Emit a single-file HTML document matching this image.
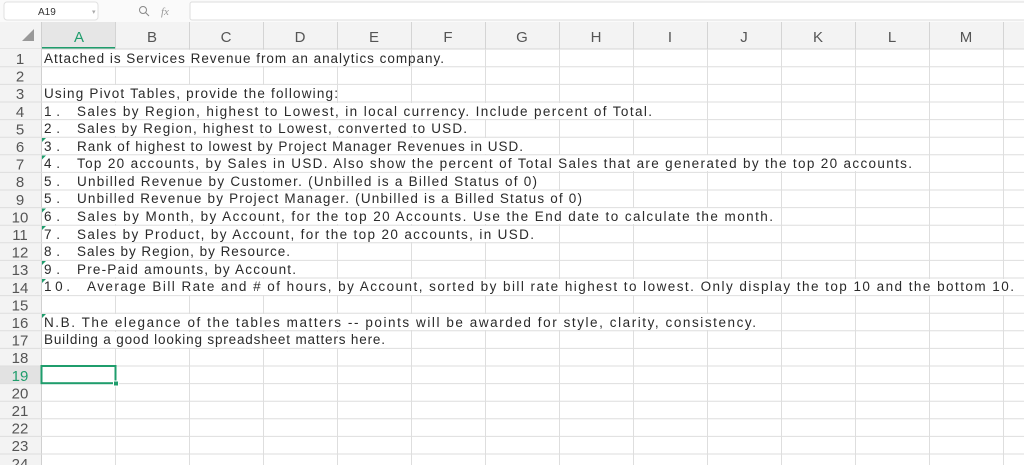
<!DOCTYPE html>
<html><head><meta charset="utf-8"><style>
html,body{margin:0;padding:0;background:#fff;overflow:hidden}
svg{display:block;font-family:"Liberation Sans",sans-serif}
</style></head><body>
<svg width="1024" height="465" viewBox="0 0 1024 465" xmlns="http://www.w3.org/2000/svg">
<rect width="1024" height="465" fill="#fff"/>
<!-- top bar -->
<rect x="0" y="0" width="1024" height="22" fill="#fafafa"/>
<rect x="4" y="2" width="94" height="18" rx="3" fill="#fff" stroke="#e0e0e0"/>
<text x="38" y="15" font-size="10" fill="#333">A19</text>
<text x="92" y="14" font-size="7" fill="#aaa">▾</text>
<circle cx="143" cy="10" r="3.5" fill="none" stroke="#888" stroke-width="1"/>
<line x1="145.5" y1="12.5" x2="149" y2="16" stroke="#888"/>
<text x="161" y="15" font-size="11" font-style="italic" font-family="Liberation Serif,serif" fill="#999">fx</text>
<rect x="190" y="2" width="840" height="18" rx="2" fill="#fff" stroke="#ddd"/>
<!-- header row -->
<rect x="0" y="22" width="1024" height="27" fill="#f3f3f3"/>
<rect x="41" y="22" width="74" height="27" fill="#e6e6e6"/>
<rect x="41" y="47" width="74" height="2" fill="#1f9d6c"/>
<line x1="0" y1="49" x2="1024" y2="49" stroke="#d4d4d4"/>
<polygon points="34,29 34,41 22,41" fill="#999"/>
<g font-size="15" fill="#555" text-anchor="middle">
<text x="79" y="42" fill="#1f9d6c">A</text><text x="152" y="42">B</text><text x="226" y="42">C</text><text x="300" y="42">D</text><text x="374" y="42">E</text><text x="448" y="42">F</text><text x="522" y="42">G</text><text x="596" y="42">H</text><text x="670" y="42">I</text><text x="744" y="42">J</text><text x="818" y="42">K</text><text x="892" y="42">L</text><text x="966" y="42">M</text>
</g>
<g stroke="#d4d4d4">
<line x1="115.5" y1="22" x2="115.5" y2="49"/><line x1="189.5" y1="22" x2="189.5" y2="49"/><line x1="263.5" y1="22" x2="263.5" y2="49"/><line x1="337.5" y1="22" x2="337.5" y2="49"/><line x1="411.5" y1="22" x2="411.5" y2="49"/><line x1="485.5" y1="22" x2="485.5" y2="49"/><line x1="559.5" y1="22" x2="559.5" y2="49"/><line x1="633.5" y1="22" x2="633.5" y2="49"/><line x1="707.5" y1="22" x2="707.5" y2="49"/><line x1="781.5" y1="22" x2="781.5" y2="49"/><line x1="855.5" y1="22" x2="855.5" y2="49"/><line x1="929.5" y1="22" x2="929.5" y2="49"/><line x1="1003.5" y1="22" x2="1003.5" y2="49"/>
</g>
<!-- row header -->
<rect x="0" y="49" width="41" height="416" fill="#f3f3f3"/>
<rect x="0" y="365.8" width="41" height="17.6" fill="#e2e2e2"/>
<line x1="41.5" y1="22" x2="41.5" y2="465" stroke="#d0d0d0"/>
<!-- grid -->
<g stroke="#dedede">
<line x1="115.5" y1="49" x2="115.5" y2="465"/><line x1="189.5" y1="49" x2="189.5" y2="465"/><line x1="263.5" y1="49" x2="263.5" y2="465"/><line x1="337.5" y1="49" x2="337.5" y2="465"/><line x1="411.5" y1="49" x2="411.5" y2="465"/><line x1="485.5" y1="49" x2="485.5" y2="465"/><line x1="559.5" y1="49" x2="559.5" y2="465"/><line x1="633.5" y1="49" x2="633.5" y2="465"/><line x1="707.5" y1="49" x2="707.5" y2="465"/><line x1="781.5" y1="49" x2="781.5" y2="465"/><line x1="855.5" y1="49" x2="855.5" y2="465"/><line x1="929.5" y1="49" x2="929.5" y2="465"/><line x1="1003.5" y1="49" x2="1003.5" y2="465"/>
</g>
<g fill="#fff">
<rect x="42" y="50" width="369" height="16"/>
<rect x="42" y="85" width="295" height="16"/>
<rect x="42" y="103" width="665" height="16"/>
<rect x="42" y="120" width="443" height="16"/>
<rect x="42" y="138" width="517" height="16"/>
<rect x="42" y="155" width="887" height="16"/>
<rect x="42" y="173" width="517" height="16"/>
<rect x="42" y="191" width="591" height="16"/>
<rect x="42" y="208" width="739" height="16"/>
<rect x="42" y="226" width="517" height="16"/>
<rect x="42" y="243" width="295" height="16"/>
<rect x="42" y="261" width="295" height="16"/>
<rect x="42" y="279" width="982" height="16"/>
<rect x="42" y="314" width="739" height="16"/>
<rect x="42" y="332" width="369" height="16"/>
</g>
<g stroke="#dedede">
<line x1="0" y1="66.8" x2="1024" y2="66.8"/><line x1="0" y1="84.4" x2="1024" y2="84.4"/><line x1="0" y1="102" x2="1024" y2="102"/><line x1="0" y1="119.6" x2="1024" y2="119.6"/><line x1="0" y1="137.2" x2="1024" y2="137.2"/><line x1="0" y1="154.8" x2="1024" y2="154.8"/><line x1="0" y1="172.4" x2="1024" y2="172.4"/><line x1="0" y1="190" x2="1024" y2="190"/><line x1="0" y1="207.6" x2="1024" y2="207.6"/><line x1="0" y1="225.2" x2="1024" y2="225.2"/><line x1="0" y1="242.8" x2="1024" y2="242.8"/><line x1="0" y1="260.4" x2="1024" y2="260.4"/><line x1="0" y1="278" x2="1024" y2="278"/><line x1="0" y1="295.6" x2="1024" y2="295.6"/><line x1="0" y1="313.2" x2="1024" y2="313.2"/><line x1="0" y1="330.8" x2="1024" y2="330.8"/><line x1="0" y1="348.4" x2="1024" y2="348.4"/><line x1="0" y1="366" x2="1024" y2="366"/><line x1="0" y1="383.6" x2="1024" y2="383.6"/><line x1="0" y1="401.2" x2="1024" y2="401.2"/><line x1="0" y1="418.8" x2="1024" y2="418.8"/><line x1="0" y1="436.4" x2="1024" y2="436.4"/><line x1="0" y1="454" x2="1024" y2="454"/>
</g>
<!-- green error marks -->
<g fill="#1f9d6c">
<polygon points="42,138 46,138 42,142"/><polygon points="42,155.5 46,155.5 42,159.5"/><polygon points="42,208.5 46,208.5 42,212.5"/><polygon points="42,226 46,226 42,230"/><polygon points="42,261 46,261 42,265"/><polygon points="42,279 46,279 42,283"/><polygon points="42,314 46,314 42,318"/>
</g>
<!-- row numbers -->
<g font-size="15" fill="#555" text-anchor="middle">
<text x="20" y="64">1</text><text x="20" y="81.6">2</text><text x="20" y="99.2">3</text><text x="20" y="116.8">4</text><text x="20" y="134.4">5</text><text x="20" y="152">6</text><text x="20" y="169.6">7</text><text x="20" y="187.2">8</text><text x="20" y="204.8">9</text><text x="20" y="222.4">10</text><text x="20" y="240">11</text><text x="20" y="257.6">12</text><text x="20" y="275.2">13</text><text x="20" y="292.8">14</text><text x="20" y="310.4">15</text><text x="20" y="328">16</text><text x="20" y="345.6">17</text><text x="20" y="363.2">18</text><text x="20" y="380.8" fill="#1f9d6c">19</text><text x="20" y="398.4">20</text><text x="20" y="416">21</text><text x="20" y="433.6">22</text><text x="20" y="451.2">23</text><text x="20" y="468.8">24</text>
</g>
<!-- cell text -->
<g font-size="13.5" fill="#2a2a2a">
<text x="44" y="63" textLength="400" lengthAdjust="spacing">Attached is Services Revenue from an analytics company.</text>
<text x="44" y="98" textLength="294" lengthAdjust="spacing">Using Pivot Tables, provide the following:</text>
<text x="44" y="116" textLength="16" lengthAdjust="spacing">1.</text><text x="77" y="116" textLength="575" lengthAdjust="spacing">Sales by Region, highest to Lowest, in local currency.  Include percent of Total.</text>
<text x="44" y="133" textLength="16" lengthAdjust="spacing">2.</text><text x="77" y="133" textLength="390" lengthAdjust="spacing">Sales by Region, highest to Lowest, converted to USD.</text>
<text x="44" y="151" textLength="16" lengthAdjust="spacing">3.</text><text x="77" y="151" textLength="446" lengthAdjust="spacing">Rank of highest to lowest by Project Manager Revenues in USD.</text>
<text x="44" y="168" textLength="16" lengthAdjust="spacing">4.</text><text x="77" y="168" textLength="835" lengthAdjust="spacing">Top 20 accounts, by Sales in USD.  Also show the percent of Total Sales that are generated by the top 20 accounts.</text>
<text x="44" y="186" textLength="16" lengthAdjust="spacing">5.</text><text x="77" y="186" textLength="460" lengthAdjust="spacing">Unbilled Revenue by Customer.  (Unbilled is a Billed Status of 0)</text>
<text x="44" y="203" textLength="16" lengthAdjust="spacing">5.</text><text x="77" y="203" textLength="505" lengthAdjust="spacing">Unbilled Revenue by Project Manager.  (Unbilled is a Billed Status of 0)</text>
<text x="44" y="221" textLength="16" lengthAdjust="spacing">6.</text><text x="77" y="221" textLength="696" lengthAdjust="spacing">Sales by Month, by Account, for the top 20 Accounts.  Use the End date to calculate the month.</text>
<text x="44" y="239" textLength="16" lengthAdjust="spacing">7.</text><text x="77" y="239" textLength="457" lengthAdjust="spacing">Sales by Product, by Account, for the top 20 accounts, in USD.</text>
<text x="44" y="256" textLength="16" lengthAdjust="spacing">8.</text><text x="77" y="256" textLength="213" lengthAdjust="spacing">Sales by Region, by Resource.</text>
<text x="44" y="274" textLength="16" lengthAdjust="spacing">9.</text><text x="77" y="274" textLength="219" lengthAdjust="spacing">Pre-Paid amounts, by Account.</text>
<text x="44" y="291" textLength="26" lengthAdjust="spacing">10.</text><text x="87" y="291" textLength="927" lengthAdjust="spacing">Average Bill Rate and # of hours, by Account, sorted by bill rate highest to lowest.  Only display the top 10 and the bottom 10.</text>
<text x="44" y="327" textLength="712" lengthAdjust="spacing">N.B.  The elegance of the tables matters -- points will be awarded for style, clarity, consistency.</text>
<text x="44" y="344" textLength="341" lengthAdjust="spacing">Building a good looking spreadsheet matters here.</text>
</g>
<!-- selection -->
<rect x="41.5" y="366" width="74" height="17.2" fill="none" stroke="#1f9d6c" stroke-width="2"/>
<rect x="113.5" y="381" width="5" height="5" fill="#1f9d6c" stroke="#fff" stroke-width="1"/>
</svg>
</body></html>
